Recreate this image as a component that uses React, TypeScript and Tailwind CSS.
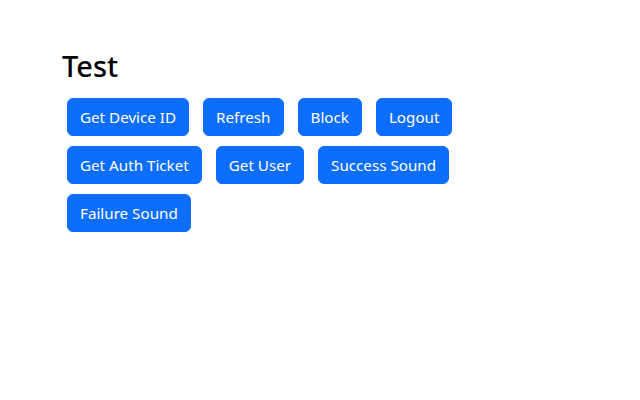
import React from "react";

const actions = [
  "Get Device ID",
  "Refresh",
  "Block",
  "Logout",
  "Get Auth Ticket",
  "Get User",
  "Success Sound",
  "Failure Sound",
];

export default function App() {
  return (
    <div className="min-h-[400px] bg-white font-['Noto_Sans',sans-serif] text-[#212529]">
      <div className="mx-auto w-[540px] px-3 pt-[47px]">
        <h1 className="mb-2 text-[29px] font-medium leading-[38px] text-black">Test</h1>
        <div className="flex flex-wrap gap-x-[4px]">
          {actions.map((label) => (
            <button
              key={label}
              type="button"
              className="m-[5px] rounded-[6px] border border-[#0d6efd] bg-[#0d6efd] px-3 py-1.5 text-[15.2px] leading-6 text-white"
            >
              {label}
            </button>
          ))}
        </div>
      </div>
    </div>
  );
}
